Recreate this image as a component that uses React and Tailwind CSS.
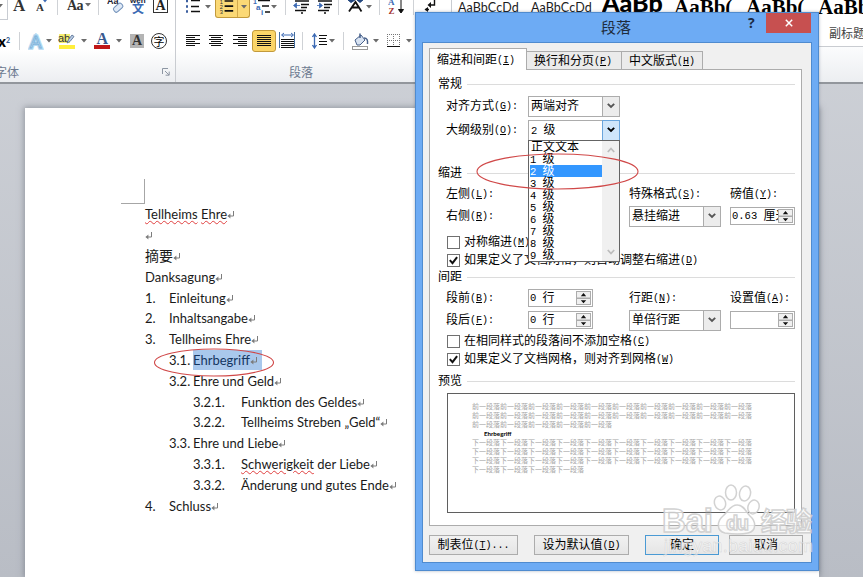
import React from 'react';
import clsx from 'clsx';

const SIM = "font-['Liberation_Mono','Noto_Sans_CJK_SC',monospace]";

/* ---------- small shared pieces ---------- */

function Caret({ className }) {
  return (
    <svg width="6" height="4" viewBox="0 0 6 4" className={clsx('shrink-0', className)}>
      <path d="M0 0h6L3 3.5z" fill="#6b6b6b" />
    </svg>
  );
}

function Divider({ className }) {
  return <div className={clsx('w-px shrink-0 bg-[#cfd2d6]', className)} />;
}

function Lines({ rows, className }) {
  return (
    <svg width="15" height="14" viewBox="0 0 15 14" className={clsx('shrink-0', className)}>
      {rows.map(([x, w], i) => (
        <rect key={i} x={x} y={1 + i * 2} width={w} height="1" fill="#111" />
      ))}
    </svg>
  );
}

function Return() {
  return (
    <svg width="8" height="8" viewBox="0 0 8 8" className="mt-[2px] shrink-0">
      <path d="M6.5 0v5H1.5" fill="none" stroke="#7c7c7c" />
      <path d="M3.4 2.6v4.8L0.4 5z" fill="#7c7c7c" />
    </svg>
  );
}

/* Label with an access key: 对齐方式(G): */
function Label({ text, hotkey, tail = '', className }) {
  return (
    <span className={clsx('flex items-center pt-[2px] text-[12px] leading-none whitespace-pre text-black', SIM, className)}>
      <span>{text}</span>
      {hotkey && (
        <span className="text-[10px]">
          (<span className="underline decoration-1 underline-offset-1">{hotkey}</span>){tail}
        </span>
      )}
    </span>
  );
}

function Section({ title, className }) {
  return (
    <div className={clsx('flex items-center pr-[6px] pl-[8px]', className)}>
      <Label text={title} />
      <div className="ml-[5px] h-px flex-1 bg-[#dcdcdc]" />
    </div>
  );
}

function Select({ children, active, className }) {
  return (
    <div className={clsx('flex h-[21px] border border-[#acacac] bg-white', className)}>
      <span className={clsx('flex flex-1 items-center pt-[2px] pl-[2px] text-[12px] leading-none whitespace-pre', SIM)}>{children}</span>
      <span
        className={clsx(
          '-my-px -mr-px flex w-[18px] items-center justify-center border',
          active ? 'border-[#6aa5dc] bg-[#cfe6fb]' : 'border-[#acacac] bg-[#ececec]'
        )}
      >
        <svg width="8" height="6" viewBox="0 0 8 6">
          <path d="M0.8 0.8L4 4l3.2-3.2" fill="none" stroke={active ? '#000' : '#555'} strokeWidth="1.9" />
        </svg>
      </span>
    </div>
  );
}

function Spinner({ children, className }) {
  return (
    <div className={clsx('flex h-[18px] border border-[#acacac] bg-white p-px', className)}>
      <span className={clsx('flex flex-1 items-center overflow-hidden pt-px text-[12px] leading-none whitespace-pre', SIM)}>
        {children}
      </span>
      <svg width="15" height="14" viewBox="0 0 15 14" className="shrink-0">
        <rect x="0.5" y="0.5" width="14" height="6.5" fill="#f0f0f0" stroke="#acacac" />
        <rect x="0.5" y="7.5" width="14" height="6" fill="#f0f0f0" stroke="#acacac" />
        <path d="M4.8 5.2L7.5 2l2.7 3.2zM4.8 9.2h5.4l-2.7 3z" fill="#111" />
      </svg>
    </div>
  );
}

/* Half width latin + full width hanzi, the way the dialog font sets them */
function Mixed({ a, b }) {
  return (
    <>
      <span className="text-[10.5px]">{a}</span>
      <span>{b}</span>
    </>
  );
}

function Check({ checked, children, className }) {
  return (
    <div className={clsx('flex h-[18px] items-center pl-[17px]', className)}>
      <svg width="13" height="13" viewBox="0 0 13 13" className="mr-[4px] shrink-0">
        <rect x="0.5" y="0.5" width="12" height="12" fill="#fff" stroke="#707070" />
        {checked && <path d="M2.8 6.2l2.7 3 4.6-6" fill="none" stroke="#111" strokeWidth="2" />}
      </svg>
      {children}
    </div>
  );
}

/* ---------- ribbon ---------- */

function FontGroup() {
  return (
    <div className="flex h-[82px] w-[175px] shrink-0 flex-col">
      <div className="flex h-[20px] items-start font-['Liberation_Serif',serif] font-bold text-[#333]">
        <div className="h-[20px] w-[8px] shrink-0 border-r border-b border-[#c8ccd2] bg-white pt-[4px]">
          <Caret className="-ml-[3px]" />
        </div>
        <span className="-mt-[3px] ml-[5px] w-[23px] text-[17px] leading-[18px]">A</span>
        <svg width="12" height="13" viewBox="0 0 12 13" className="mr-[9px] shrink-0">
          <text x="0" y="11" fontSize="11" fill="#333">A</text>
          <path d="M7 0h4L9 2.500z" fill="#3c6ab4" />
        </svg>
        <Divider className="h-[15px]" />
        <span className="-mt-[3px] ml-[9px] w-[18px] text-[14px] leading-[18px] tracking-tighter">Aa</span>
        <Caret className="mt-[3px]" />
        <Divider className="ml-[7px] h-[15px]" />
        <svg width="18" height="14" viewBox="0 0 18 14" className="ml-[8px] shrink-0">
          <text x="0" y="4" fontSize="9" fill="#223" fontFamily="Liberation Sans">Aa</text>
          <rect x="-5" y="-2.5" width="10" height="5.5" rx="2" transform="translate(11 7.5) rotate(-42)" fill="#dfe9f6" stroke="#6f8fb8" />
        </svg>
        <svg width="17" height="14" viewBox="0 0 17 14" className="ml-[5px] shrink-0">
          <text x="0" y="2.500" fontSize="8" fill="#223" fontFamily="Liberation Sans">wén</text>
          <text x="2" y="12.500" fontSize="12" fill="#3c6ab4" fontFamily="Noto Sans CJK SC">文</text>
        </svg>
        <svg width="16" height="14" viewBox="0 0 16 14" className="ml-[6px] shrink-0">
          <rect x="0.5" y="-2" width="14" height="14.5" fill="#fff" stroke="#333" />
          <text x="2.5" y="10" fontSize="14" fontWeight="bold" fill="#222" fontFamily="Liberation Serif">A</text>
        </svg>
      </div>
      <div className="mt-[11px] flex h-[20px] items-center">
        <span className="-ml-[2px] w-[21px] font-['Lato',sans-serif] text-[15px] leading-none font-black">
          x<sup className="text-[7px] text-[#3a5f94]">2</sup>
        </span>
        <Divider className="h-[18px]" />
        <svg width="16" height="17" viewBox="0 0 16 17" className="ml-[8px] shrink-0">
          <text x="2" y="14.5" fontSize="17" fontFamily="Liberation Sans" fill="#fff" stroke="#b5daf2" strokeWidth="3.500">A</text>
          <text x="2" y="14.5" fontSize="17" fontFamily="Liberation Sans" fill="#fff" stroke="#7db4dc" strokeWidth="1">A</text>
        </svg>
        <Caret className="ml-[2px]" />
        <svg width="18" height="18" viewBox="0 0 18 18" className="ml-[6px] shrink-0">
          <rect x="1" y="2" width="11" height="9" fill="#f5ee70" />
          <text x="0" y="10" fontSize="11" fontFamily="Liberation Sans" fill="#333">ab</text>
          <path d="M9 11l1.5-3.5L14 3l2 1.5-4 5z" fill="#b9cbe3" stroke="#4b678d" strokeWidth="0.8" />
          <rect x="1" y="13" width="16" height="4" fill="#ffee3c" />
        </svg>
        <Caret className="ml-[5px]" />
        <svg width="17" height="18" viewBox="0 0 17 18" className="ml-[7px] shrink-0">
          <text x="2.5" y="11.5" fontSize="16" fontWeight="bold" fontFamily="Liberation Serif" fill="#39598f">A</text>
          <rect x="0" y="13" width="16" height="4" fill="#c01818" />
        </svg>
        <Caret className="ml-[5px]" />
        <span className="ml-[8px] h-[14px] w-[14px] shrink-0 bg-[#b4b4b4] text-center font-['Liberation_Serif',serif] text-[14px] leading-[14px] font-bold text-[#333]">
          A
        </span>
        <span className="ml-[7px] flex h-[16px] w-[16px] shrink-0 items-center justify-center rounded-full border border-[#333] font-['Noto_Sans_CJK_SC',sans-serif] text-[11px] leading-none">
          字
        </span>
      </div>
      <div className="mt-[13px] flex items-center justify-between pr-[5px]">
        <span className="-ml-[5px] font-['Noto_Sans_CJK_SC',sans-serif] text-[12px] leading-[16px] text-[#6d7a90]">字体</span>
        <svg width="8" height="8" viewBox="0 0 8 8">
          <path d="M0.5 6V0.5H6M3 3l4 4M7.2 3.6v3.6H3.6" fill="none" stroke="#8d96a3" />
        </svg>
      </div>
    </div>
  );
}

function Indent({ flip }) {
  return (
    <svg width="17" height="14" viewBox="0 0 17 14" className="shrink-0">
      <path d="M2 1h14M8 4.5h8M8 7.5h6M2 10.5h11M8 13h2" stroke="#111" strokeWidth="1.3" />
      <path d={flip ? 'M1 5.5h3M3.5 3l3 2.5-3 2.5z' : 'M3 5.5h4M3.5 3l-3 2.5 3 2.5z'} fill="#3c6ab4" stroke="#3c6ab4" strokeWidth="0.8" />
    </svg>
  );
}

function ParagraphGroup() {
  return (
    <div className="flex h-[82px] w-[276px] shrink-0 flex-col border-l border-[#c9ccd1]">
      <div className="flex h-[20px] items-start">
        <svg width="15" height="14" viewBox="0 0 15 14" className="ml-[10px] shrink-0">
          <path d="M5 0.5h9M5 6.5h8M5 11.5h9" stroke="#111" strokeWidth="1.4" />
          <path d="M0 1h2M0 6.5h2M0 11.5h2" stroke="#3c5f9f" strokeWidth="2.4" />
        </svg>
        <Caret className="mt-[5px] ml-[4px]" />
        <div className="ml-[4px] flex h-[18px] w-[35px] shrink-0 rounded-b-[3px] border border-t-0 border-[#c29a3c] bg-[#fbd976]">
          <svg width="22" height="17" viewBox="0 0 22 17" className="shrink-0 border-r border-[#d3aa4c]">
            <path d="M9 0.7h9M9 6h9M9 11h9" stroke="#111" strokeWidth="1.6" />
            <text x="4" y="4" fontSize="6" fontFamily="Liberation Sans" fill="#333">1</text>
            <text x="4" y="9" fontSize="6" fontFamily="Liberation Sans" fill="#333">2</text>
            <text x="4" y="14" fontSize="6" fontFamily="Liberation Sans" fill="#333">3</text>
          </svg>
          <Caret className="mt-[5px] ml-[3px]" />
        </div>
        <svg width="17" height="15" viewBox="0 0 17 15" className="ml-[3px] shrink-0">
          <path d="M5 0.5h12M9 6h7M12 12h5" stroke="#111" strokeWidth="1.5" />
          <g fontFamily="Liberation Sans" fontWeight="bold" fill="#3c6ab4">
            <text x="0" y="4" fontSize="7">1</text>
            <text x="3" y="10" fontSize="8">a</text>
            <text x="8" y="15" fontSize="8">i</text>
          </g>
        </svg>
        <Caret className="mt-[5px] ml-px" />
        <Divider className="ml-[8px] h-[15px]" />
        <div className="ml-[7px] flex gap-[6px]">
          <Indent />
          <Indent flip />
        </div>
        <Divider className="ml-[5px] h-[15px]" />
        <svg width="18" height="14" viewBox="0 0 18 14" className="ml-[8px] shrink-0">
          <path d="M2 11.5L8.5 2l6 9.5M4.5 7.5h8" fill="none" stroke="#111" strokeWidth="1.8" />
          <path d="M1 0l3 2.5L8 0M10 0l3 2.5L16 0" fill="#23477f" stroke="#23477f" strokeWidth="1" />
        </svg>
        <Caret className="mt-[5px] ml-px" />
        <Divider className="ml-[7px] h-[15px]" />
        <svg width="17" height="15" viewBox="0 0 17 15" className="ml-[8px] shrink-0">
          <text x="0" y="5" fontSize="9" fontWeight="bold" fontFamily="Liberation Serif" fill="#3c6ab4">A</text>
          <text x="0.5" y="13.5" fontSize="9" fontWeight="bold" fontFamily="Liberation Serif" fill="#a3332f">Z</text>
          <path d="M13 0v12M10.5 9.5h5L13 13z" stroke="#111" fill="#111" />
        </svg>
        <Divider className="ml-[8px] h-[15px]" />
        <svg width="12" height="13" viewBox="0 0 12 13" className="ml-[10px] shrink-0">
          <path d="M10.5 0v5H6M5 9.5H1.5" stroke="#111" fill="none" strokeWidth="1.4" />
          <path d="M7 2v6L3.5 5zM4 7v5l-3.5-2.5z" fill="#111" />
        </svg>
      </div>
      <div className="mt-[9px] flex h-[23px] items-center">
        <Lines className="ml-[10px]" rows={[[0, 14], [0, 9], [0, 14], [0, 9], [0, 14], [0, 9]]} />
        <Lines className="ml-[8px]" rows={[[0, 14], [2, 10], [0, 14], [2, 10], [0, 14], [2, 10]]} />
        <Lines className="ml-[9px]" rows={[[0, 14], [5, 9], [0, 14], [5, 9], [0, 14], [5, 9]]} />
        <div className="ml-[4px] flex h-[22px] w-[24px] shrink-0 items-center justify-center rounded-[3px] border border-[#c29a3c] bg-[#fbd568]">
          <Lines rows={[[0, 14], [0, 14], [0, 14], [0, 14], [0, 14], [0, 14]]} />
        </div>
        <svg width="17" height="17" viewBox="0 0 17 17" className="ml-[3px] shrink-0">
          <path d="M0.5 0v16M15.5 0v16" stroke="#47709f" />
          <path d="M3 3h11M5 1L2.5 3 5 5M12 1l2.5 2L12 5" stroke="#3c6ab4" fill="none" />
          <path d="M2 7.5h13M2 9.5h13M2 11.5h13M2 13.5h13M2 15.5h13" stroke="#111" />
        </svg>
        <Divider className="ml-[6px] h-[18px]" />
        <svg width="16" height="16" viewBox="0 0 16 16" className="ml-[9px] shrink-0">
          <path d="M2.5 1v14M0.5 4l2-3 2 3M0.5 12l2 3 2-3" stroke="#3c6ab4" fill="none" strokeWidth="1.3" />
          <path d="M7 2.5h8M7 5.5h7M7 8.5h8M7 11.5h8" stroke="#111" />
        </svg>
        <Caret className="ml-px" />
        <Divider className="ml-[8px] h-[18px]" />
        <svg width="18" height="18" viewBox="0 0 18 18" className="ml-[8px] shrink-0">
          <path d="M3 8l6-5 4 5-5 5H5z" fill="#d8e3f2" stroke="#47608a" />
          <path d="M8 6V1.5M12 6c3 0 4 2 3.5 6" fill="none" stroke="#47608a" strokeWidth="1.5" />
          <rect x="0.5" y="14.5" width="15" height="3" fill="#fff" stroke="#999" />
        </svg>
        <Caret className="ml-[3px]" />
        <svg width="14" height="14" viewBox="0 0 14 14" className="ml-[8px] shrink-0">
          <path d="M0.5 0v13M6.5 0v13M12.5 0v13M0 0.5h13M0 6.5h13" stroke="#777" strokeDasharray="1 1" />
          <path d="M0 12.5h13" stroke="#111" />
        </svg>
        <Caret className="ml-[5px]" />
      </div>
      <span className="mt-[12px] pl-[113px] font-['Noto_Sans_CJK_SC',sans-serif] text-[12px] leading-[16px] text-[#6d7a90]">段落</span>
    </div>
  );
}

function StylesGroup() {
  return (
    <div className="flex h-[82px] flex-1 flex-col overflow-hidden border-l border-[#c9ccd1]">
      <div className="flex h-[47px] border-b border-[#c9ccd1] bg-white pl-[6px] whitespace-nowrap text-[#1c1c1c]">
        <span className="w-[73px] shrink-0 font-['Lato',sans-serif] text-[12.5px] leading-[16px] tracking-[0.1px]">AaBbCcDd</span>
        <span className="w-[71px] shrink-0 font-['Lato',sans-serif] text-[12.5px] leading-[16px] tracking-[0.1px]">AaBbCcDd</span>
        <span className="-mt-[6px] h-[20px] w-[61px] shrink-0 overflow-hidden font-['Lato',sans-serif] text-[25px] leading-[17px] font-black text-black">AaBb</span>
        <span className="-mt-[3px] ml-[11px] h-[20px] w-[62px] shrink-0 overflow-hidden font-['Liberation_Serif',serif] text-[21px] leading-[21px] font-bold text-black">AaBb(</span>
        <span className="-mt-[3px] ml-[10px] h-[20px] w-[62px] shrink-0 overflow-hidden font-['Liberation_Serif',serif] text-[21px] leading-[21px] font-bold text-black">AaBb(</span>
        <div className="ml-[10px] flex w-[60px] shrink-0 flex-col">
          <span className="-mt-[3px] font-['Liberation_Serif',serif] text-[21px] leading-[21px] font-bold text-black">AaBb</span>
          <span className="mt-[7px] pl-[11px] font-['Noto_Sans_CJK_SC',sans-serif] text-[12px] leading-[16px] text-[#444]">副标题</span>
        </div>
      </div>
      <div className="flex-1 bg-gradient-to-b from-[#fbfcfd] to-[#eceef1]" />
    </div>
  );
}

/* ---------- document ---------- */

const outline = [
  { pad: 'pl-0', num: '1.', numW: 'w-[24px]', text: 'Einleitung' },
  { pad: 'pl-0', num: '2.', numW: 'w-[24px]', text: 'Inhaltsangabe' },
  { pad: 'pl-0', num: '3.', numW: 'w-[24px]', text: 'Tellheims Ehre' },
  { pad: 'pl-[24px]', num: '3.1.', numW: 'w-[24px]', text: 'Ehrbegriff', selected: true },
  { pad: 'pl-[24px]', num: '3.2.', numW: 'w-[24px]', text: 'Ehre und Geld' },
  { pad: 'pl-[48px]', num: '3.2.1.', numW: 'w-[48px]', text: 'Funktion des Geldes' },
  { pad: 'pl-[48px]', num: '3.2.2.', numW: 'w-[48px]', text: 'Tellheims Streben „Geld“' },
  { pad: 'pl-[24px]', num: '3.3.', numW: 'w-[24px]', text: 'Ehre und Liebe' },
  { pad: 'pl-[48px]', num: '3.3.1.', numW: 'w-[48px]', misspelled: 'Schwerigkeit', text: ' der Liebe' },
  { pad: 'pl-[48px]', num: '3.3.2.', numW: 'w-[48px]', text: 'Änderung und gutes Ende' },
  { pad: 'pl-0', num: '4.', numW: 'w-[24px]', text: 'Schluss' },
];

const WAVY = 'underline decoration-[#e04040] decoration-wavy decoration-[0.8px] underline-offset-[1px]';
const ROW = 'flex h-[20.8px] items-center whitespace-pre';

function Page() {
  return (
    <div className="mt-[24px] ml-[25px] h-[480px] w-[794px] bg-white shadow-[0_0_6px_1px_rgba(90,95,105,0.5)]">
      <div className="pt-[71px] pl-[96px]">
        <div className="h-[25px] w-[24px] border-r border-b border-[#a6a6a6]" />
      </div>
      <div className="pl-[120px] font-['Lato','Noto_Sans_CJK_SC',sans-serif] text-[13px] leading-[18px] text-[#1a1a1a]">
        <div className={ROW}>
          <span>
            <span className={WAVY}>Tellheims</span> <span className={WAVY}>Ehre</span>
          </span>
          <Return />
        </div>
        <div className={ROW}><Return /></div>
        <div className={ROW}><span className="text-[14px]">摘要</span><Return /></div>
        <div className={ROW}>Danksagung<Return /></div>
        {outline.map((row) => (
          <div key={row.num} className={clsx(ROW, row.pad)}>
            <span className={clsx('shrink-0', row.numW)}>{row.num}</span>
            <span className={clsx('flex items-center', row.selected && 'h-[20px] bg-[#a9c8ec] pr-[4px] text-[#15365f]')}>
              {row.misspelled && <span className={WAVY}>{row.misspelled}</span>}
              {row.text}
              <Return />
            </span>
          </div>
        ))}
      </div>
    </div>
  );
}

/* ---------- paragraph dialog ---------- */

function LevelList() {
  const levels = [1, 2, 3, 4, 5, 6, 7, 8, 9];
  return (
    <div className="absolute top-[20px] left-0 z-10 flex h-[122px] w-[92px] border border-[#646464] bg-white">
      <div className={clsx('flex-1 overflow-hidden pl-px text-[12px] leading-[14px]', SIM)}>
        <div className="h-[12px] pl-px">正文文本</div>
        {levels.map((n) => (
          <div
            key={n}
            className={clsx('h-[12px] whitespace-pre', n === 2 && 'bg-[#3397ff] text-white')}
          >
            <Mixed a={`${n} `} b="级" />
          </div>
        ))}
      </div>
      <div className="flex w-[17px] flex-col items-center justify-between bg-[#f0f0f0] py-[6px]">
        <svg width="8" height="6" viewBox="0 0 8 6"><path d="M0.8 5L4 1.5 7.2 5" fill="none" stroke="#bdbdbd" strokeWidth="1.8" /></svg>
        <svg width="8" height="6" viewBox="0 0 8 6"><path d="M0.8 1L4 4.5 7.2 1" fill="none" stroke="#bdbdbd" strokeWidth="1.8" /></svg>
      </div>
    </div>
  );
}

function Preview() {
  const prev = '前一段落';
  const next = '下一段落';
  return (
    <div className="mt-[3px] ml-[17px] h-[120px] w-[348px] border border-[#5f5f5f] bg-white pt-[8px] pl-[24px] font-['Noto_Sans_CJK_SC',sans-serif] text-[7px] leading-[9px] whitespace-nowrap text-[#a6a6a6]">
      <p>{prev.repeat(10)}</p>
      <p>{prev.repeat(10)}</p>
      <p>{prev.repeat(5)}</p>
      <p className="h-[9px] pl-[12px] font-['Lato',sans-serif] text-[6.200px] font-bold text-black">Ehrbegriff</p>
      <p>{next.repeat(10)}</p>
      <p>{next.repeat(10)}</p>
      <p>{next.repeat(10)}</p>
      <p>{next.repeat(4)}</p>
    </div>
  );
}

function DialogButton({ children, primary, className }) {
  return (
    <button
      className={clsx(
        'flex h-[20px] shrink-0 items-center justify-center border bg-gradient-to-b from-[#f1f1f1] to-[#e5e5e5]',
        primary ? 'border-[#4a9ad4]' : 'border-[#acacac]',
        className
      )}
    >
      {children}
    </button>
  );
}

function ParagraphDialog() {
  return (
    <div className="absolute top-[12px] left-[415px] flex h-[559px] w-[404px] flex-col border border-[#4f8bcf] bg-[#6dabf4] shadow-[0_0_3px_rgba(60,80,110,0.4)]">
      <div className="flex h-[29px] shrink-0 items-start">
        <span className="w-[228px] pt-[5px] pl-[185px] font-['Noto_Sans_CJK_SC',sans-serif] text-[15px] leading-[18px] whitespace-nowrap text-[#1e2c3d]">段落</span>
        <span className="ml-[104px] w-[18px] pt-px font-['Open_Sans',sans-serif] text-[14px] leading-[18px] font-bold text-[#1b2a44]">?</span>
        <span className="flex h-[20px] w-[45px] items-center justify-center bg-[#c75050]">
          <svg width="8" height="8" viewBox="0 0 8 8"><path d="M0.8 0.8l6.4 6.4M7.2 0.8L0.8 7.2" stroke="#fff" strokeWidth="1.5" /></svg>
        </span>
      </div>
      <div className="mx-[6px] flex h-[521px] flex-col border border-[#4f8bcf] bg-[#f0f0f0] px-[6px]">
        <div className="flex h-[26px] shrink-0 items-end">
          <div className="z-[1] -mb-px flex h-[22px] w-[98px] items-center border border-b-0 border-[#acacac] bg-white pl-[7px]">
            <Label text="缩进和间距" hotkey="I" />
          </div>
          <div className="flex h-[18px] w-[95px] items-center border border-b-0 border-l-0 border-[#acacac] bg-[#ebebeb] pl-[7px]">
            <Label text="换行和分页" hotkey="P" />
          </div>
          <div className="flex h-[18px] w-[81px] items-center border border-b-0 border-l-0 border-[#acacac] bg-[#ebebeb] pl-[7px]">
            <Label text="中文版式" hotkey="H" />
          </div>
        </div>
        <div className="h-[457px] w-[373px] shrink-0 border border-[#acacac] bg-white pt-[3px]">
          <Section title="常规" className="h-[22px]" />
          <div className="flex h-[22px] items-center">
            <Label text="对齐方式" hotkey="G" tail=":" className="w-[98px] pl-[16px]" />
            <Select className="w-[92px]">两端对齐</Select>
          </div>
          <div className="flex h-[26px] items-center">
            <Label text="大纲级别" hotkey="O" tail=":" className="w-[98px] pl-[16px]" />
            <div className="relative">
              <Select active className="w-[92px]"><Mixed a="2 " b="级" /></Select>
              <LevelList />
            </div>
          </div>
          <Section title="缩进" className="mt-[19px] h-[22px]" />
          <div className="flex h-[20px] items-center">
            <Label text="左侧" hotkey="L" tail=":" className="w-[199px] pl-[16px]" />
            <Label text="特殊格式" hotkey="S" tail=":" className="w-[101px]" />
            <Label text="磅值" hotkey="Y" tail=":" />
          </div>
          <div className="flex h-[24px] items-center">
            <Label text="右侧" hotkey="R" tail=":" className="w-[199px] pl-[16px]" />
            <Select className="w-[92px]">悬挂缩进</Select>
            <Spinner className="ml-[9px] w-[65px]"><Mixed a="0.63 " b="厘米" /></Spinner>
          </div>
          <Check className="mt-[5px]"><Label text="对称缩进" hotkey="M" /></Check>
          <Check checked><Label text="如果定义了文档网格，则自动调整右缩进" hotkey="D" /></Check>
          <Section title="间距" className="h-[16px]" />
          <div className="mt-[2px] flex h-[22px] items-center">
            <Label text="段前" hotkey="B" tail=":" className="w-[98px] pl-[16px]" />
            <Spinner className="w-[65px]"><Mixed a="0 " b="行" /></Spinner>
            <Label text="行距" hotkey="N" tail=":" className="ml-[36px] w-[101px]" />
            <Label text="设置值" hotkey="A" tail=":" />
          </div>
          <div className="flex h-[22px] items-center">
            <Label text="段后" hotkey="F" tail=":" className="w-[98px] pl-[16px]" />
            <Spinner className="w-[65px]"><Mixed a="0 " b="行" /></Spinner>
            <Select className="ml-[36px] w-[92px]">单倍行距</Select>
            <Spinner className="ml-[9px] w-[65px]" />
          </div>
          <Check className="mt-px"><Label text="在相同样式的段落间不添加空格" hotkey="C" /></Check>
          <Check checked><Label text="如果定义了文档网格，则对齐到网格" hotkey="W" /></Check>
          <Section title="预览" className="mt-[4px] h-[18px]" />
          <Preview />
        </div>
        <div className="mt-[9px] flex">
          <DialogButton className="w-[89px]"><Label text="制表位" hotkey="T" tail="..." /></DialogButton>
          <DialogButton className="ml-[16px] w-[95px]"><Label text="设为默认值" hotkey="D" /></DialogButton>
          <DialogButton primary className="ml-[16px] w-[74px]"><Label text="确定" /></DialogButton>
          <DialogButton className="ml-[10px] w-[74px]"><Label text="取消" /></DialogButton>
        </div>
      </div>
    </div>
  );
}

function Marks() {
  return (
    <svg className="pointer-events-none absolute inset-0 z-20" width="863" height="577" viewBox="0 0 863 577">
      <ellipse cx="214" cy="362.5" rx="59.5" ry="13.5" fill="none" stroke="#d04848" strokeWidth="1.1" />
      <ellipse cx="557.5" cy="171.5" rx="80.5" ry="17.5" fill="none" stroke="#d04848" strokeWidth="1.1" />
    </svg>
  );
}

function Watermark() {
  return (
    <svg className="pointer-events-none absolute top-[480px] left-[658px] z-20" width="162" height="80" viewBox="0 0 162 80">
      <g fill="#fff" fillOpacity="0.7" stroke="#cdcdcd" strokeWidth="1.5" strokeOpacity="0.9">
        <ellipse cx="62" cy="23" rx="5.5" ry="7" transform="rotate(-18 62 23)" />
        <ellipse cx="73" cy="12.5" rx="5.5" ry="7.5" />
        <ellipse cx="87" cy="13.5" rx="5.5" ry="7.5" transform="rotate(12 87 13.5)" />
        <ellipse cx="95.5" cy="27" rx="5.5" ry="7" transform="rotate(18 95.5 27)" />
        <path d="M79 25c7 0 9 7 13 11 6 5 7 15-2 17-5 1-16 1-23 0-9-2-8-12-2-17 5-4 7-11 14-11z" />
        <text x="4" y="52" fontSize="33" fontWeight="bold" fontFamily="Liberation Sans" textLength="51">Bai</text>
        <text x="68" y="50" fontSize="20" fontWeight="bold" fontFamily="Liberation Sans" textLength="23">du</text>
        <text x="103" y="51" fontSize="26" fontWeight="bold" fontFamily="Noto Sans CJK SC" textLength="51">经验</text>
      </g>
      <text x="6" y="72" fontSize="18" fontFamily="Liberation Sans" textLength="149" fill="#fff" fillOpacity="0.6" stroke="#bdbdbd" strokeOpacity="0.6" strokeWidth="0.5">
        jingyan.baidu.com
      </text>
    </svg>
  );
}

export default function App() {
  return (
    <div className="relative flex h-[577px] w-[863px] flex-col overflow-hidden bg-gradient-to-b from-[#cfd2d8] to-[#b9bdc5]">
      <div className="flex h-[84px] shrink-0 border-b-2 border-[#92969c] bg-gradient-to-b from-white from-60% to-[#eceef1]">
        <FontGroup />
        <ParagraphGroup />
        <StylesGroup />
      </div>
      <Page />
      <ParagraphDialog />
      <Marks />
      <Watermark />
    </div>
  );
}
